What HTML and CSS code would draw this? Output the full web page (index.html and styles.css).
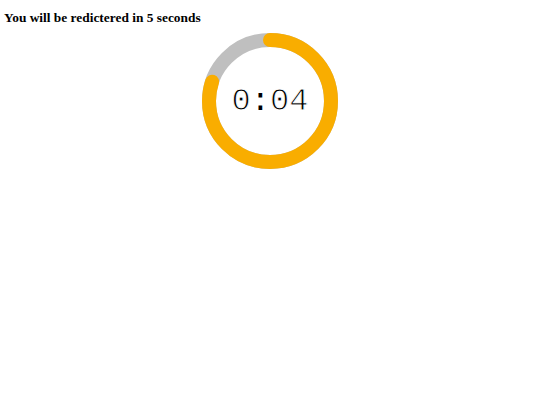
FILE: index.html
```html
<!DOCTYPE html>
<html>
<head>
<meta charset="utf-8">
<link rel="stylesheet" href="styles.css">
</head>
<body>
<h3 class="title">You will be redictered in 5 seconds</h3>
<div class="timer">
  <svg class="ring" width="140" height="140" viewBox="0 0 140 140">
    <circle cx="70" cy="70" r="61" fill="none" stroke="#bfbfbf" stroke-width="14"/>
    <circle cx="70" cy="70" r="61" fill="none" stroke="#f9ad00" stroke-width="14" stroke-linecap="round"
      stroke-dasharray="306.6 383.3" transform="rotate(-90 70 70)"/>
  </svg>
  <div class="time">0<span class="colon">:</span>04</div>
</div>
</body>
</html>
```
FILE: styles.css
```css
html, body { margin: 0; padding: 0; background: #fff; }
body { padding: 4px; }
.title {
  font-family: "Liberation Serif", "Times New Roman", serif;
  font-weight: bold;
  font-size: 13.4px;
  margin: 6px 0 0 0;
  line-height: 16px;
  color: #000;
}
.timer {
  position: relative;
  width: 140px;
  height: 140px;
  margin: 5px auto 0 auto;
}
.ring { display: block; }
.time {
  position: absolute;
  inset: 0;
  display: flex;
  align-items: center;
  justify-content: center;
  font-family: "Liberation Mono", "Courier New", monospace;
  font-size: 32px;
  color: #000;
  -webkit-text-stroke: 0.9px #fff;
  padding-top: 1px;
}
.colon {
  -webkit-text-stroke: 0;
}
```
